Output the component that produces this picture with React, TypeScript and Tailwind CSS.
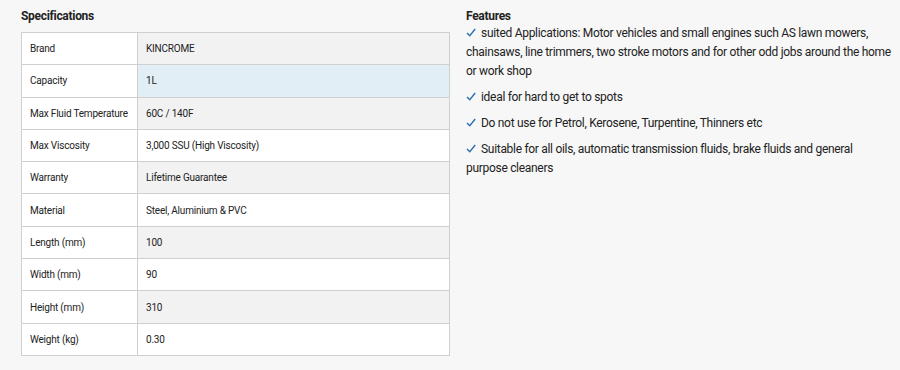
const specs: [string, string][] = [
  ["Brand", "KINCROME"],
  ["Capacity", "1L"],
  ["Max Fluid Temperature", "60C / 140F"],
  ["Max Viscosity", "3,000 SSU (High Viscosity)"],
  ["Warranty", "Lifetime Guarantee"],
  ["Material", "Steel, Aluminium & PVC"],
  ["Length (mm)", "100"],
  ["Width (mm)", "90"],
  ["Height (mm)", "310"],
  ["Weight (kg)", "0.30"],
];

const features: string[] = [
  "suited Applications: Motor vehicles and small engines such AS lawn mowers, chainsaws, line trimmers, two stroke motors and for other odd jobs around the home or work shop",
  "ideal for hard to get to spots",
  "Do not use for Petrol, Kerosene, Turpentine, Thinners etc",
  "Suitable for all oils, automatic transmission fluids, brake fluids and general purpose cleaners",
];

const Check = () => (
  <svg
    width="10"
    height="9"
    viewBox="0 0 10 9"
    className="inline-block align-baseline mr-[5px]"
    fill="none"
  >
    <path d="M1 5 L3.8 7.8 L9.2 1" stroke="#2f6db5" strokeWidth="1.4" />
  </svg>
);

export default function App() {
  return (
    <div className="w-[900px] h-[370px] bg-[#f7f7f7] font-['Roboto',sans-serif] text-[#222] flex pl-[21px] pt-[9px] gap-[16px]">
      <div className="w-[429px] shrink-0">
        <h3 className="text-[12px] font-bold leading-[14px] h-[23px] tracking-[-0.3px]">
          Specifications
        </h3>
        <table className="w-full border-collapse text-[10px] tracking-[-0.2px]">
          <tbody>
            {specs.map(([label, value], i) => (
              <tr key={label} className="h-[32.3px]">
                <td className="w-[116px] border border-[#cfcfcf] bg-white pl-[8px]">
                  {label}
                </td>
                <td
                  className={
                    "border border-[#cfcfcf] pl-[8px] " +
                    (i === 1
                      ? "bg-[#e2eef5]"
                      : i % 2 === 0
                      ? "bg-[#f2f2f2]"
                      : "bg-white")
                  }
                >
                  {value}
                </td>
              </tr>
            ))}
          </tbody>
        </table>
      </div>
      <div className="w-[426px]">
        <h3 className="text-[12px] font-bold leading-[14px] tracking-[-0.3px]">Features</h3>
        <div className="text-[12px] leading-[19px] tracking-[-0.3px] flex flex-col gap-[7px] mt-[1px]">
          {features.map((f) => (
            <p key={f}>
              <Check />
              {f}
            </p>
          ))}
        </div>
      </div>
    </div>
  );
}
